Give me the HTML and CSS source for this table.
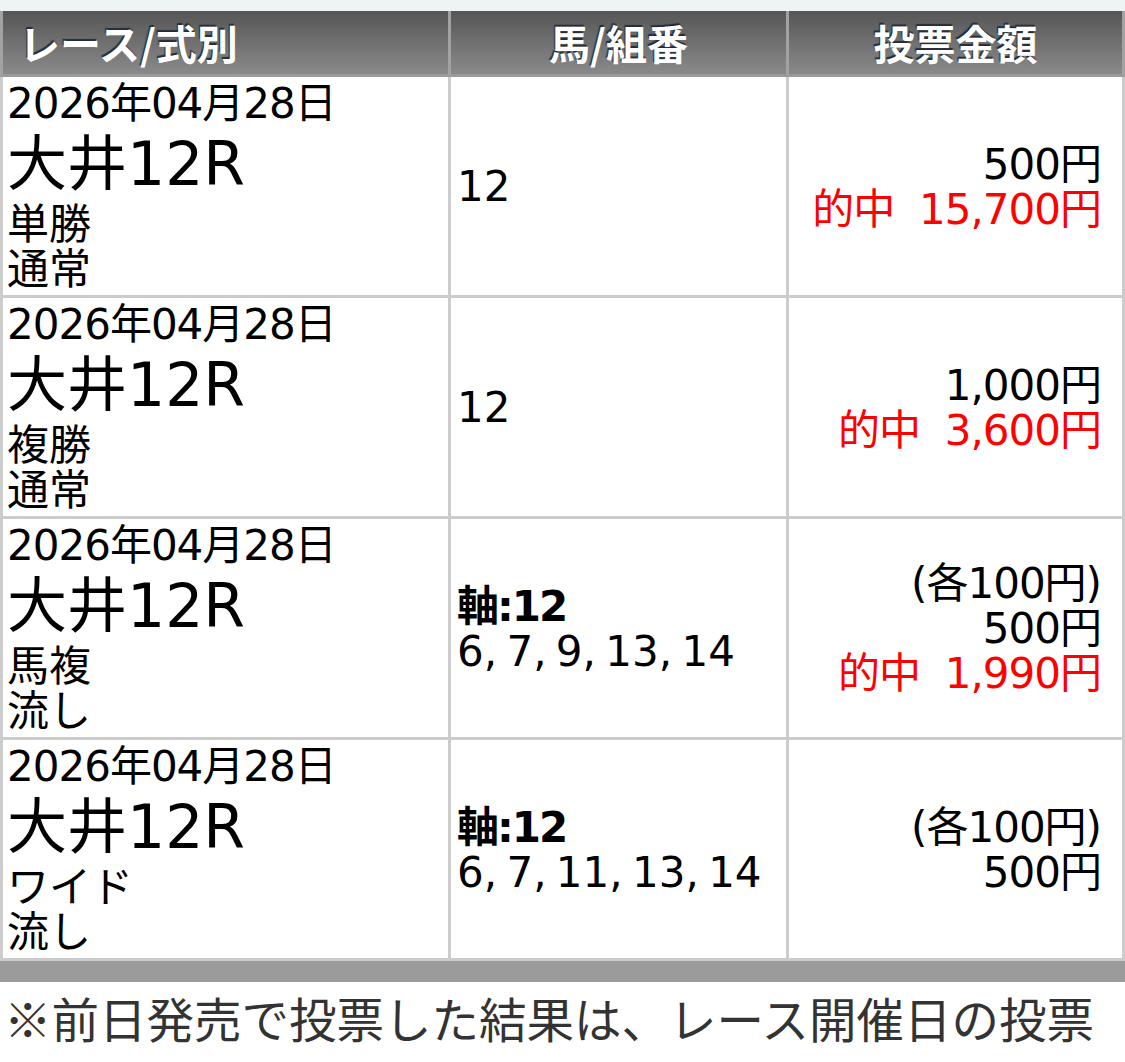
FILE: index.html
```html
<!DOCTYPE html>
<html lang="ja">
<head>
<meta charset="utf-8">
<title>投票内容</title>
<link rel="stylesheet" href="styles.css">
</head>
<body>
<div class="topbar"></div>
<table class="bets">
  <thead>
    <tr>
      <th class="c1">レース/式別</th>
      <th class="c2">馬/組番</th>
      <th class="c3">投票金額</th>
    </tr>
  </thead>
  <tbody>
    <tr>
      <td class="race">
        <div class="date">2026年04月28日</div>
        <div class="venue">大井12R</div>
        <div>単勝</div>
        <div>通常</div>
      </td>
      <td class="horse"><div>12</div></td>
      <td class="amount">
        <div>500円</div>
        <div class="hit">的中&nbsp;&nbsp;15,700円</div>
      </td>
    </tr>
    <tr>
      <td class="race">
        <div class="date">2026年04月28日</div>
        <div class="venue">大井12R</div>
        <div>複勝</div>
        <div>通常</div>
      </td>
      <td class="horse"><div>12</div></td>
      <td class="amount">
        <div>1,000円</div>
        <div class="hit">的中&nbsp;&nbsp;3,600円</div>
      </td>
    </tr>
    <tr>
      <td class="race">
        <div class="date">2026年04月28日</div>
        <div class="venue">大井12R</div>
        <div>馬複</div>
        <div>流し</div>
      </td>
      <td class="horse">
        <div class="axis">軸:12</div>
        <div class="list">6, 7, 9, 13, 14</div>
      </td>
      <td class="amount">
        <div>(各100円)</div>
        <div>500円</div>
        <div class="hit">的中&nbsp;&nbsp;1,990円</div>
      </td>
    </tr>
    <tr>
      <td class="race">
        <div class="date">2026年04月28日</div>
        <div class="venue">大井12R</div>
        <div>ワイド</div>
        <div>流し</div>
      </td>
      <td class="horse">
        <div class="axis">軸:12</div>
        <div class="list">6, 7, 11, 13, 14</div>
      </td>
      <td class="amount">
        <div>(各100円)</div>
        <div>500円</div>
      </td>
    </tr>
  </tbody>
</table>
<div class="footbar"></div>
<p class="note">※前日発売で投票した結果は、レース開催日の投票</p>
</body>
</html>
```

FILE: styles.css
```css
html, body {
  margin: 0;
  padding: 0;
  background: #ffffff;
}

body {
  width: 1125px;
  font-family: "DejaVu Sans", "Noto Sans CJK JP", sans-serif;
  color: #000;
}

.topbar {
  height: 11px;
  background: #eef4f4;
}

.bets {
  width: 1125px;
  border-collapse: separate;
  border-spacing: 0;
  table-layout: fixed;
}

.bets th,
.bets td {
  box-sizing: border-box;
}

.bets th {
  height: 66px;
  padding: 0;
  background: linear-gradient(#565656, #8a8a8a);
  color: #fff;
  font-family: "Noto Sans CJK JP", sans-serif;
  font-weight: bold;
  font-size: 41px;
  line-height: 63px;
  text-shadow: -1px -2px 1px #242c36;
  border-right: 3px solid #a2a2a2;
  border-bottom: 3px solid #9a9a9a;
  text-align: center;
  white-space: nowrap;
}

.bets th.c1 {
  width: 451px;
  text-align: left;
  padding-left: 16px;
  border-left: 3px solid #a2a2a2;
}

.bets th.c2 {
  width: 338px;
}

.bets th.c3 {
  width: 336px;
}

.bets td {
  vertical-align: middle;
  border-right: 3px solid #cccccc;
  border-bottom: 3px solid #cccccc;
  font-size: 42px;
  line-height: 45px;
  padding: 4px 4px 3px 4px;
  white-space: nowrap;
}

.bets td.race {
  border-left: 3px solid #cccccc;
  padding-left: 4px;
}

.date {
  letter-spacing: -1px;
}

.venue {
  font-size: 60px;
  line-height: 76px;
}

.bets td.horse {
  padding-left: 6px;
}

.axis {
  font-weight: bold;
  letter-spacing: -2px;
}

.list {
  word-spacing: -4px;
}

.bets td.amount {
  text-align: right;
  padding-right: 21px;
  letter-spacing: -1px;
}

.hit {
  color: #ff0000;
}

.footbar {
  height: 21px;
  background: #9b9b9b;
}

.note {
  margin: 0;
  padding: 0 4px;
  font-family: "Noto Sans CJK JP", sans-serif;
  font-size: 47.5px;
  line-height: 72px;
  color: #333333;
  white-space: nowrap;
}
```
